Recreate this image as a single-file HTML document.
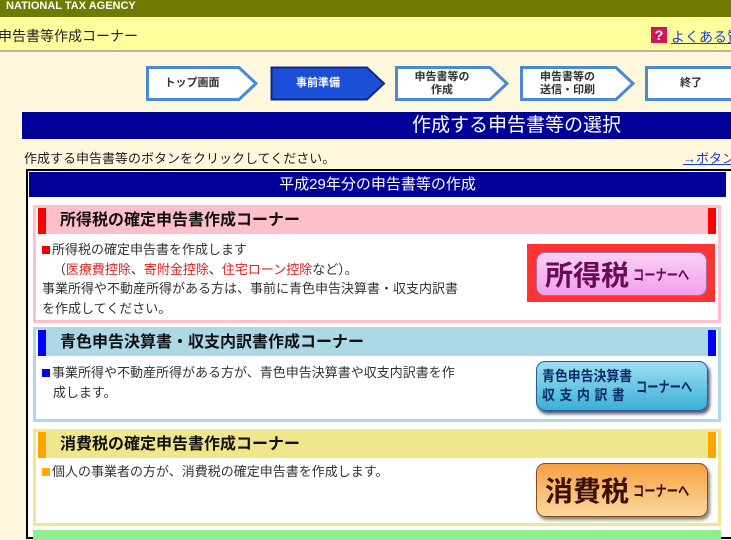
<!DOCTYPE html>
<html><head><meta charset="utf-8"><style>
*{margin:0;padding:0;box-sizing:border-box}
body{width:731px;height:533px;overflow:hidden;background:#fff8dc;font-family:"Liberation Sans","Noto Sans CJK JP",sans-serif;position:relative;font-size:13px;color:#222}
.a{position:absolute}
.step{position:absolute;top:66px;height:35px;}
.step svg{position:absolute;left:0;top:0}
.step span{position:absolute;left:0;top:0;height:35px;display:flex;align-items:center;justify-content:center;text-align:center;font-size:11px;font-weight:bold;line-height:13px;color:#333}
.sec{position:absolute;left:33px;width:688px;border:3px solid;background:#fff}
.hd{position:absolute;left:2px;right:2px;top:0;height:26px;font-weight:bold;font-size:16px;line-height:26px;padding-left:22px;color:#111}
.hd:before,.hd:after{content:"";position:absolute;top:0;width:8px;height:26px;background:var(--m)}
.hd:before{left:0}.hd:after{right:0}
.tx{position:absolute;left:6px;font-size:13px;line-height:19.5px;color:#333;white-space:nowrap}
.sq{display:inline-block;width:8px;height:8px;margin-right:2px}
.btn{position:absolute;border-radius:9px;display:flex;align-items:center;font-weight:bold;white-space:nowrap;overflow:hidden}
.cn{display:inline-block;font-size:15px;transform:scaleX(0.75);transform-origin:left center;margin-left:4px}
</style></head><body>
<div class="a" style="left:0;top:0;width:731px;height:17px;background:#6f7a00;color:#fff;font-weight:bold;font-size:11px;line-height:13px;padding-left:6px">NATIONAL TAX AGENCY</div>
<div class="a" style="left:0;top:17px;width:731px;height:35px;background:#ffff9e;border-bottom:2px solid #b8b8a0"></div>
<div class="a" style="left:-2px;top:26px;font-size:14px;color:#222">申告書等作成コーナー</div>
<div class="a" style="left:651px;top:27px;width:16px;height:16px;background:#d4145a;color:#fff;font-weight:bold;font-size:14px;line-height:16px;text-align:center">?</div>
<div class="a" style="left:671px;top:27px;font-size:14px;color:#1a3fd0;text-decoration:underline;white-space:nowrap">よくある質</div>

<div class="step" style="left:146px;width:112px"><svg width="112" height="35"><path d="M1.5 1.5H93L110 17.5L93 33.5H1.5Z" fill="#fff" stroke="#4a88d8" stroke-width="3"/></svg><span style="width:92px">トップ画面</span></div>
<div class="step" style="left:270px;width:116px"><svg width="116" height="35"><path d="M1.5 1.5H97L114 17.5L97 33.5H1.5Z" fill="#1c4fd8" stroke="#0d2a8a" stroke-width="2"/></svg><span style="width:96px;color:#fff">事前準備</span></div>
<div class="step" style="left:395px;width:114px"><svg width="114" height="35"><path d="M1.5 1.5H95L112 17.5L95 33.5H1.5Z" fill="#fff" stroke="#4a88d8" stroke-width="3"/></svg><span style="width:94px">申告書等の<br>作成</span></div>
<div class="step" style="left:520px;width:115px"><svg width="115" height="35"><path d="M1.5 1.5H96L113 17.5L96 33.5H1.5Z" fill="#fff" stroke="#4a88d8" stroke-width="3"/></svg><span style="width:95px">申告書等の<br>送信・印刷</span></div>
<div class="step" style="left:645px;width:100px"><svg width="100" height="35"><path d="M1.5 1.5H98V33.5H1.5Z" fill="#fff" stroke="#4a88d8" stroke-width="3"/></svg><span style="width:92px">終了</span></div>

<div class="a" style="left:22px;top:112px;width:709px;height:27px;background:#000099;color:#fff;font-size:19px;line-height:27px;padding-left:390px;white-space:nowrap">作成する申告書等の選択</div>
<div class="a" style="left:24px;top:148px;font-size:13px;color:#222">作成する申告書等のボタンをクリックしてください。</div>
<div class="a" style="left:683px;top:148px;font-size:13px;color:#1a3fd0;text-decoration:underline;white-space:nowrap">→ボタン</div>

<div class="a" style="left:26px;top:169px;width:710px;height:370px;border:2px solid #000;background:#fff"></div>
<div class="a" style="left:29px;top:172px;width:697px;height:25px;background:#000099;color:#fff;font-size:15px;line-height:25px;text-align:center">平成29年分の申告書等の作成</div>

<div class="sec" style="top:205px;height:118px;border-color:#ffc0cb">
 <div class="hd" style="--m:#f00;background:#ffc0cb">所得税の確定申告書作成コーナー</div>
 <div class="tx" style="top:32px"><span class="sq" style="background:#e00"></span>所得税の確定申告書を作成します<br>&nbsp;&nbsp;&nbsp;（<span style="color:#d22">医療費控除</span>、<span style="color:#d22">寄附金控除</span>、<span style="color:#d22">住宅ローン控除</span>など）。<br>事業所得や不動産所得がある方は、事前に青色申告決算書・収支内訳書<br>を作成してください。</div>
 <div class="a" style="left:491px;top:36px;width:188px;height:58px;background:#f33"></div>
 <div class="btn" style="left:500px;top:44px;width:171px;height:44px;background:linear-gradient(#f9d0f4,#f2a0ea);color:#6a0a5a;border:1px solid #a070a0"><span style="font-size:28px;margin-left:8px">所得税</span><span class="cn">コーナーへ</span></div>
</div>

<div class="sec" style="top:327px;height:95px;border-color:#add8e6">
 <div class="hd" style="--m:#00f;background:#add8e6">青色申告決算書・収支内訳書作成コーナー</div>
 <div class="tx" style="top:33px"><span class="sq" style="background:#00e"></span>事業所得や不動産所得がある方が、青色申告決算書や収支内訳書を作<br>&nbsp;&nbsp;&nbsp;成します。</div>
 <div class="btn" style="left:500px;top:31px;width:172px;height:50px;background:linear-gradient(#9ee0f0,#3ab0d8);color:#0a2a6a;border:1px solid #2a5a8a;box-shadow:2px 3px 3px #557"><span style="font-size:14px;line-height:19px;margin-left:5px;display:inline-block;width:108px;transform:scaleX(0.92);transform-origin:left center">青色申告決算書<br><span style="letter-spacing:5px">収支内訳書</span></span><span class="cn" style="margin-left:-4px">コーナーへ</span></div>
</div>

<div class="sec" style="top:429px;height:97px;border-color:#f0e68c">
 <div class="hd" style="--m:#ffa500;background:#f0e68c">消費税の確定申告書作成コーナー</div>
 <div class="tx" style="top:30px"><span class="sq" style="background:#fa0"></span>個人の事業者の方が、消費税の確定申告書を作成します。</div>
 <div class="btn" style="left:500px;top:31px;width:172px;height:54px;background:linear-gradient(#f8a040,#fcd8a0);color:#3a1008;border:1px solid #8a4a20;box-shadow:2px 3px 3px #887"><span style="font-size:28px;margin-left:8px">消費税</span><span class="cn">コーナーへ</span></div>
</div>
<div class="a" style="left:33px;top:530px;width:688px;height:10px;background:#90ee90"></div>
</body></html>
